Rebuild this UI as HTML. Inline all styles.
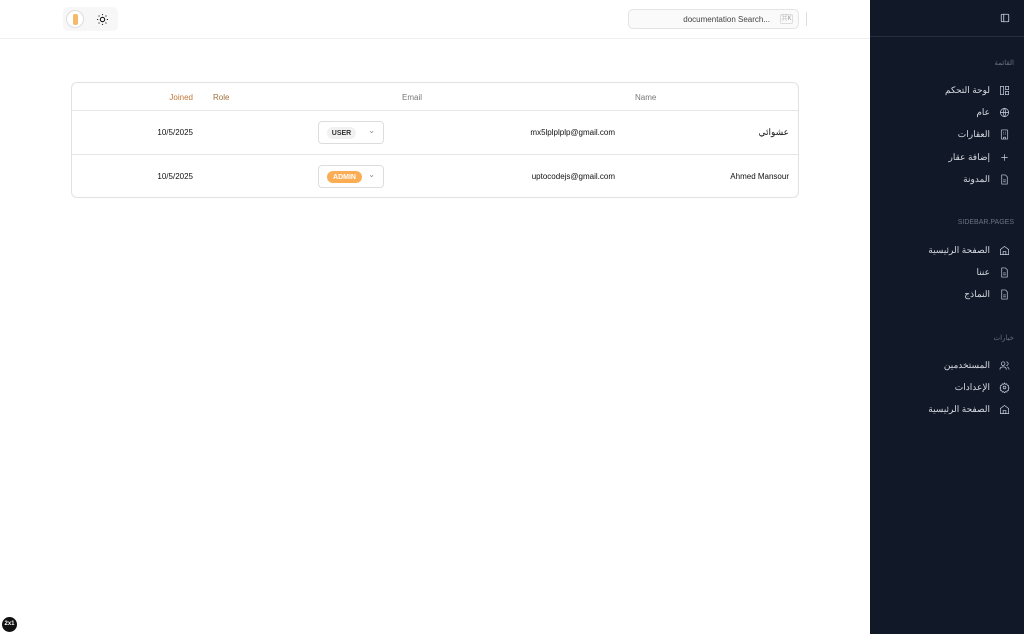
<!DOCTYPE html>
<html><head><meta charset="utf-8"><style>
*{box-sizing:border-box;margin:0;padding:0}
body{width:1024px;height:634px;overflow:hidden;background:#fff;font-family:"Liberation Sans","Noto Sans CJK SC",sans-serif;position:relative;color:#111}
.sb{position:absolute;left:870px;top:0;width:154px;height:634px;background:#111827;color:#d1d5db}
.sb .top{height:37px;border-bottom:1px solid #243042;position:relative}
.lbl{position:absolute;right:10px;font-size:7px;color:#6b7280}
.it{position:absolute;right:14px;display:flex;align-items:center;gap:9px;font-size:9px;color:#d7dbe2}
.it svg{width:11px;height:11px;stroke:#cbd5e1;fill:none;stroke-width:1.5}
.hdr{position:absolute;left:0;top:0;width:870px;height:39px;border-bottom:1px solid #f0f0f0}
.srch{position:absolute;left:628px;top:9px;width:171px;height:20px;border:1px solid #e3e3e3;border-radius:5px;background:#fafafa;font-size:8px;color:#444;text-align:right;padding:5px 28px 0 0}
.kbd{position:absolute;right:5px;top:4px;width:13px;height:10px;border:1px solid #ddd;border-radius:2px;font-size:6px;color:#999;text-align:center;line-height:9px}
.tb{position:absolute;left:71px;top:82px;width:728px;height:116px;border:1px solid #e2e2e2;border-radius:6px;font-size:8px}
.row{position:absolute;left:0;width:726px;border-bottom:1px solid #e6e6e6}
.t{position:absolute}
.sel{position:absolute;left:246px;width:66px;height:23px;border:1px solid #ddd;border-radius:4px}
.pill{position:absolute;left:8px;top:5px;height:12px;border-radius:6px;font-size:7px;font-weight:bold;text-align:center;line-height:13px}
.chev{position:absolute;right:8px;top:4px;font-size:8px;color:#888}
</style></head><body>
<div class="hdr">
  <div style="position:absolute;left:63px;top:7px;width:55px;height:24px;background:#f7f7f7;border-radius:5px"></div>
  <div style="position:absolute;left:66px;top:10px;width:18px;height:18px;border-radius:50%;border:1px solid #ddd;background:#fff"><div style="position:absolute;left:6px;top:3px;width:5px;height:11px;background:#f5b96b;border-radius:2px"></div></div>
  <svg style="position:absolute;left:96px;top:13px" width="13" height="13" viewBox="0 0 24 24" fill="none" stroke="#111" stroke-width="2"><circle cx="12" cy="12" r="4"/><path d="M12 2v2M12 20v2M4.9 4.9l1.4 1.4M17.7 17.7l1.4 1.4M2 12h2M20 12h2M4.9 19.1l1.4-1.4M17.7 6.3l1.4-1.4"/></svg>
  <div class="srch">documentation Search...<div class="kbd">⌘K</div></div>
  <div style="position:absolute;left:806px;top:12px;width:1px;height:14px;background:#ddd"></div>
</div>
<div class="tb">
  <div class="row" style="top:0;height:28px">
    <span class="t" style="right:605px;top:10px;color:#c2773a">Joined</span>
    <span class="t" style="left:141px;top:10px;color:#a0703a">Role</span>
    <span class="t" style="left:330px;top:10px;color:#777">Email</span>
    <span class="t" style="left:563px;top:10px;color:#777">Name</span>
  </div>
  <div class="row" style="top:28px;height:44px">
    <span class="t" style="right:605px;top:17px">10/5/2025</span>
    <div class="sel" style="top:10px"><div class="pill" style="width:29px;background:#f1f1f1;color:#333">USER</div><span class="chev">⌄</span></div>
    <span class="t" style="right:183px;top:17px">mx5lplplplp@gmail.com</span>
    <span class="t" style="right:9px;top:16px;font-size:9px">عشوائي</span>
  </div>
  <div class="row" style="top:72px;height:43px;border:none">
    <span class="t" style="right:605px;top:17px">10/5/2025</span>
    <div class="sel" style="top:10px"><div class="pill" style="width:35px;background:#fbad55;color:#fff">ADMIN</div><span class="chev">⌄</span></div>
    <span class="t" style="right:183px;top:17px">uptocodejs@gmail.com</span>
    <span class="t" style="right:9px;top:17px">Ahmed Mansour</span>
  </div>
</div>
<div style="position:absolute;left:2px;top:617px;width:15px;height:15px;border-radius:50%;background:#111;color:#fff;font-size:6px;text-align:center;line-height:15px;font-weight:bold">2x1</div>
<div class="sb">
  <div class="top"><svg style="position:absolute;right:14px;top:13px" width="10" height="10" viewBox="0 0 24 24" fill="none" stroke="#cbd5e1" stroke-width="2"><rect x="3" y="3" width="18" height="18" rx="2"/><path d="M9 3v18"/></svg></div>
  <div class="lbl" style="top:59px">القائمة</div>
  <div class="it" style="top:85px">لوحة التحكم<svg viewBox="0 0 24 24"><rect x="3" y="3" width="7" height="18"/><rect x="14" y="3" width="7" height="7"/><rect x="14" y="14" width="7" height="7"/></svg></div>
  <div class="it" style="top:107px">عام<svg viewBox="0 0 24 24"><circle cx="12" cy="12" r="9"/><path d="M3 12h18M12 3c3 3 3 15 0 18M12 3c-3 3-3 15 0 18"/></svg></div>
  <div class="it" style="top:129px">العقارات<svg viewBox="0 0 24 24"><rect x="5" y="2" width="14" height="20" rx="1"/><path d="M9 7h2M13 7h2M9 11h2M13 11h2M10 22v-4h4v4"/></svg></div>
  <div class="it" style="top:152px">إضافة عقار<svg viewBox="0 0 24 24"><path d="M12 5v14M5 12h14"/></svg></div>
  <div class="it" style="top:174px">المدونة<svg viewBox="0 0 24 24"><path d="M14 2H6v20h12V6z"/><path d="M9 13h6M9 17h6"/></svg></div>
  <div class="lbl" style="top:219px">SIDEBAR.PAGES</div>
  <div class="it" style="top:245px">الصفحة الرئيسية<svg viewBox="0 0 24 24"><path d="M3 10l9-7 9 7v11H3z"/><path d="M9 21v-7h6v7"/></svg></div>
  <div class="it" style="top:267px">عننا<svg viewBox="0 0 24 24"><path d="M14 2H6v20h12V6z"/><path d="M9 13h6M9 17h6"/></svg></div>
  <div class="it" style="top:289px">النماذج<svg viewBox="0 0 24 24"><path d="M14 2H6v20h12V6z"/><path d="M9 13h6M9 17h6"/></svg></div>
  <div class="lbl" style="top:334px">خيارات</div>
  <div class="it" style="top:360px">المستخدمين<svg viewBox="0 0 24 24"><circle cx="9" cy="8" r="4"/><path d="M2 21c0-4 3-6 7-6s7 2 7 6M16 4a4 4 0 010 8M22 21c0-3-2-5-4-6"/></svg></div>
  <div class="it" style="top:382px">الإعدادات<svg viewBox="0 0 24 24"><circle cx="12" cy="12" r="3"/><path d="M12 2l2 3 3-1 1 3 3 1-1 3 2 2-2 2 1 3-3 1-1 3-3-1-2 3-2-3-3 1-1-3-3-1 1-3-2-2 2-2-1-3 3-1 1-3 3 1z"/></svg></div>
  <div class="it" style="top:404px">الصفحة الرئيسية<svg viewBox="0 0 24 24"><path d="M3 10l9-7 9 7v11H3z"/><path d="M9 21v-7h6v7"/></svg></div>
</div>
</body></html>
